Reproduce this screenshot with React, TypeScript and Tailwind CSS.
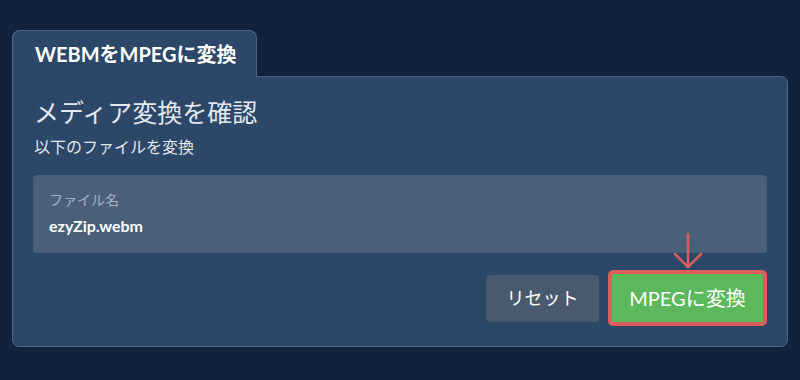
import React from "react";

export default function App() {
  return (
    <div
      className="w-[800px] h-[380px] bg-[#12223a] pt-[30px] px-[12px]"
      style={{ fontFamily: 'Lato, "Noto Sans CJK JP", sans-serif' }}
    >
      <div className="flex">
        <div className="w-[245px] h-[47px] -mb-px relative z-10 bg-[#2c4767] border border-b-0 border-[#4d6886] rounded-t-[8px] flex items-center pl-[22px] text-white font-bold text-[20px]">
          WEBMをMPEGに変換
        </div>
      </div>
      <div className="bg-[#2c4767] border border-[#4d6886] rounded-b-[7px] rounded-tr-[7px] px-[20px] pt-[18px] pb-[20px]">
        <div className="text-[25px] leading-[34px] text-[#e3e8ef] pl-px">メディア変換を確認</div>
        <div className="text-[16px] leading-[22px] text-[#e3e8ef] mt-[7px] pl-px">以下のファイルを変換</div>
        <div className="mt-[17px] h-[78px] bg-[#4a6079] rounded-[4px] pl-[16px] pt-[15px]">
          <div className="text-[14px] leading-[19px] text-[#a7b2c0]">ファイル名</div>
          <div className="text-[16px] leading-[22px] font-bold text-white mt-[6px]">ezyZip.webm</div>
        </div>
        <div className="flex justify-end items-center gap-[9px] mt-[17px]">
          <button className="w-[113px] h-[47px] bg-[#4a5a6e] rounded-[4px] text-white text-[18px]">
            リセット
          </button>
          <div className="relative">
            <svg
              className="absolute left-1/2 -translate-x-1/2 -top-[38px]"
              width="32"
              height="38"
              viewBox="0 0 32 38"
              fill="none"
              stroke="#dc5f5c"
              strokeWidth="2.5"
              strokeLinecap="round"
              strokeLinejoin="round"
            >
              <path d="M16 2 V35" />
              <path d="M3 22 L16 35 L29 22" />
            </svg>
            <button className="w-[159px] h-[56px] bg-[#5cb85c] border-[4px] border-[#dc5f5c] rounded-[5px] text-white text-[20px]">
              MPEGに変換
            </button>
          </div>
        </div>
      </div>
    </div>
  );
}
